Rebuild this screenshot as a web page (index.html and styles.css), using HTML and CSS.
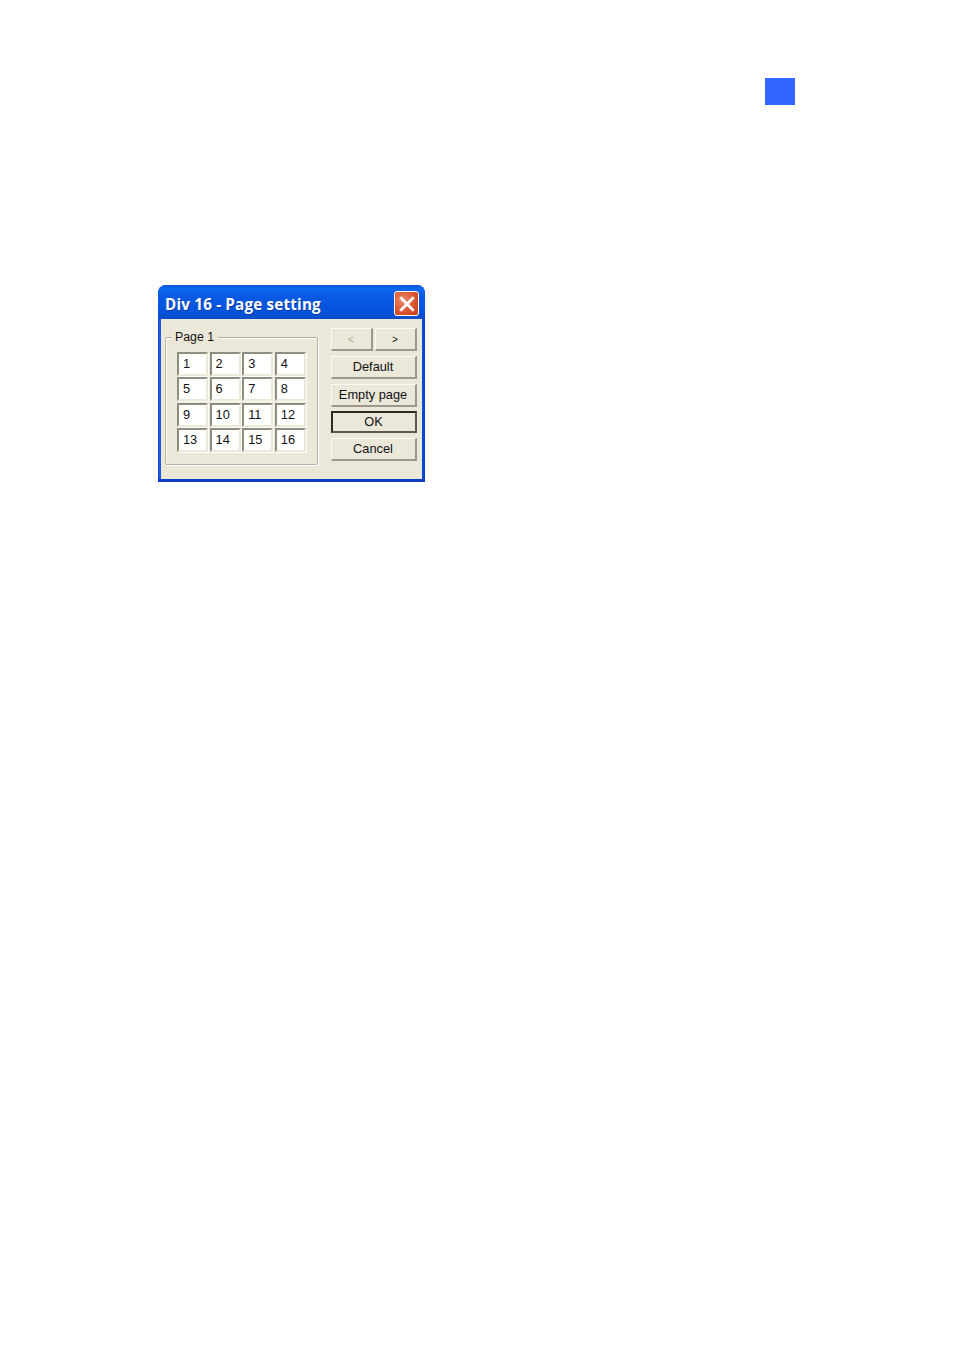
FILE: index.html
```html
<!DOCTYPE html>
<html lang="en">
<head>
<meta charset="utf-8">
<title>Div 16 - Page setting</title>
<link rel="stylesheet" href="styles.css">
</head>
<body>
<div class="marker"></div>
<div class="dialog">
  <div class="titlebar">
    <span class="title">Div 16 - Page setting</span>
    <div class="close">
      <svg viewBox="0 0 14 14" width="16" height="16"><path d="M2 2L12 12M12 2L2 12" stroke="#fff" stroke-width="2.4" stroke-linecap="square" fill="none"/></svg>
    </div>
  </div>
  <div class="client">
    <div class="group">
      <span class="legend">Page 1</span>
      <div class="grid">
        <div class="cell">1</div><div class="cell">2</div><div class="cell">3</div><div class="cell">4</div>
        <div class="cell">5</div><div class="cell">6</div><div class="cell">7</div><div class="cell">8</div>
        <div class="cell">9</div><div class="cell">10</div><div class="cell">11</div><div class="cell">12</div>
        <div class="cell">13</div><div class="cell">14</div><div class="cell">15</div><div class="cell">16</div>
      </div>
    </div>
    <div class="actions">
      <div class="pager">
        <div class="btn small disabled">&lt;</div>
        <div class="btn small">&gt;</div>
      </div>
      <div class="btn default-btn">Default</div>
      <div class="btn empty-btn">Empty page</div>
      <div class="btn ok">OK</div>
      <div class="btn cancel">Cancel</div>
    </div>
  </div>
</div>
</body>
</html>
```

FILE: styles.css
```css
html, body { margin: 0; padding: 0; background: #fff; }
body { height: 1350px; overflow: hidden; font-family: "Liberation Sans", Arial, sans-serif; }

.marker { width: 30px; height: 27px; margin: 78px 0 0 765px; background: #3366ff; }

.dialog {
  box-sizing: border-box;
  width: 267px;
  height: 197px;
  margin: 180px 0 0 158px;
  display: flex;
  flex-direction: column;
  background: linear-gradient(90deg, #0a3fc8 0, #1f62e6 2px, #0a4fd8 3px, #0a4fd8 264px, #0a3fc8 267px);
  border-bottom: 3px solid #0a3bc4;
  border-radius: 8px 8px 0 0;
  padding: 0 3px;
}

.titlebar {
  height: 34px;
  margin: 0 -3px;
  padding: 0 6px 0 7px;
  display: flex;
  align-items: center;
  justify-content: space-between;
  border-radius: 8px 8px 0 0;
  background: linear-gradient(#0a55d8 0, #0d6af0 4px, #0a5ae6 10px, #0654dd 26px, #0a4cc8 34px);
}
.title {
  color: #fff;
  font-family: "Open Sans", "Noto Sans", sans-serif;
  font-weight: 700;
  font-size: 16px;
  letter-spacing: .2px;
  margin-top: 3px;
  text-shadow: 1px 1px 0 #0a3aa0;
  white-space: nowrap;
  transform: scaleX(.95);
  transform-origin: left center;
}
.close {
  box-sizing: border-box;
  width: 25px;
  height: 25px;
  display: flex;
  align-items: center;
  justify-content: center;
  background: radial-gradient(circle at 35% 35%, #ec8a6c, #d9512b 60%, #c23a16);
  border: 1px solid #fff;
  border-radius: 3px;
  margin-top: 3px;
}

.client {
  flex: 1;
  position: relative;
  display: flex;
  background: #ebe8da;
  padding: 9px 5px 0 4px;
  font-size: 12.5px;
  color: #111;
}

.group {
  box-sizing: border-box;
  position: relative;
  width: 154px;
  height: 128px;
  margin-top: 9px;
  padding: 14px 0 0 11px;
  border: 1px solid #b5b2a2;
  box-shadow: 1px 1px 0 #fff, inset 1px 1px 0 #fff;
  border-radius: 2px;
}
.legend {
  position: absolute;
  top: -8px;
  left: 6px;
  padding: 0 4px 0 3px;
  background: #ebe8da;
  font-size: 12.3px;
  line-height: 15px;
}

.grid {
  display: grid;
  grid-template-columns: repeat(4, 31px);
  grid-auto-rows: 24px;
  column-gap: 1.6px;
  row-gap: 1.3px;
}
.cell {
  box-sizing: border-box;
  background: #fff;
  padding-left: 4px;
  font-size: 12.8px;
  line-height: 19px;
  border-style: solid;
  border-width: 2px;
  border-color: #8f8d80 #ebe8da #ebe8da #8f8d80;
  box-shadow: 1px 1px 0 #fff;
}

.actions {
  width: 86px;
  margin-left: 13px;
  display: flex;
  flex-direction: column;
}
.pager { display: flex; gap: 2px; margin-bottom: 5px; }
.btn {
  box-sizing: border-box;
  height: 23px;
  display: flex;
  align-items: center;
  justify-content: center;
  padding: 0 1px 2px 0;
  background: #ebe8da;
  font-size: 12.8px;
  border-style: solid;
  border-width: 1px 2px 2px 1px;
  border-color: #fbfaf4 #9b9888 #9b9888 #fbfaf4;
  white-space: nowrap;
}
.small { width: 42px; font-size: 10px; padding-bottom: 0; }
.disabled { color: #a8a698; }
.default-btn { margin-bottom: 5px; }
.empty-btn { margin-bottom: 4px; }
.ok {
  height: 22px;
  margin-bottom: 5px;
  border: 2px solid #2b2a22;
  border-right-color: #5a584c;
  border-bottom-color: #5a584c;
}
```
